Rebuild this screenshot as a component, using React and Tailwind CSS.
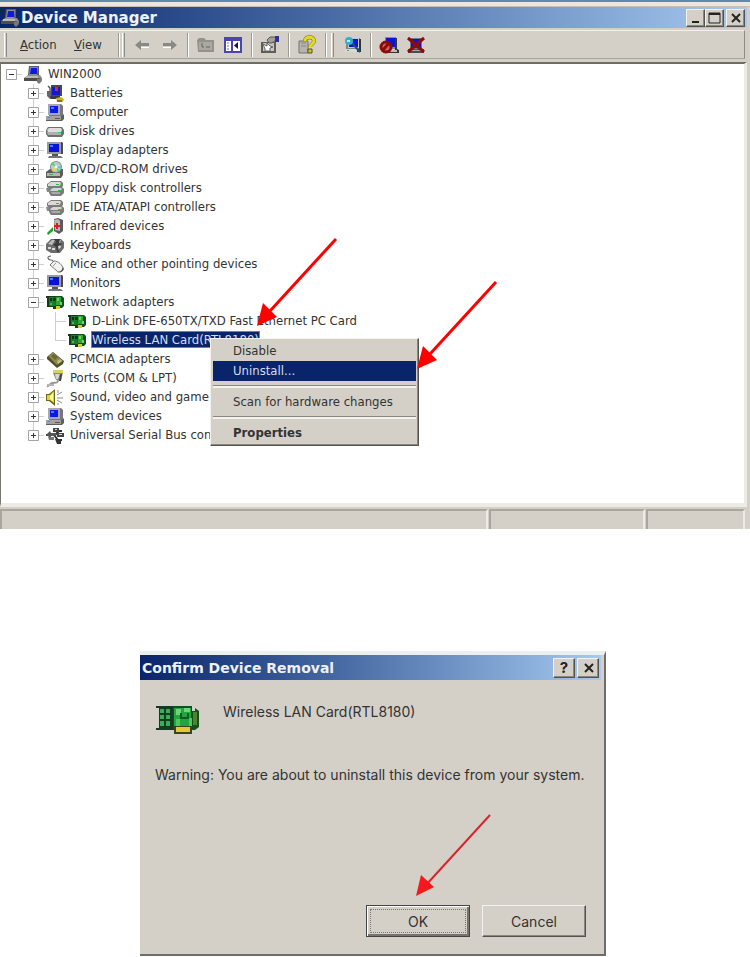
import React from "react";

const UI_FONT = "font-['DejaVu_Sans_Condensed','DejaVu_Sans',sans-serif]";
const TITLE_FONT = "font-['DejaVu_Sans',Verdana,sans-serif]";
const RAISED =
  "border border-t-[#f4f2ee] border-l-[#f4f2ee] border-r-[#55534e] border-b-[#55534e] shadow-[inset_-1px_-1px_0_#8a8780]";

/* ---------- device icons, drawn on a 22 x 19 cell ---------- */

function Cell({ children }) {
  return (
    <svg className="block h-[19px] w-[22px] shrink-0" viewBox="0 0 22 19" aria-hidden="true">
      {children}
    </svg>
  );
}

function PcShape() {
  return (
    <>
      <path d="M5 1h12l2 2v10H5z" fill="#77777b" />
      <path d="M4 1h12v11H4z" fill="#a9a9ad" />
      <path d="M6 3h8v7H6z" fill="#0a18e8" />
      <path d="M7 4h3v2H7z" fill="#3f8cff" />
      <path d="M2 13h16l2-2v5l-2 2H2z" fill="#5d5d60" />
      <path d="M2 13h15v4H2z" fill="#a2a2a2" />
      <path d="M4 14h2v1H4z" fill="#22c52c" />
      <path d="M11 15h5v1h-5z" fill="#555" />
    </>
  );
}

function DriveShape() {
  return (
    <>
      <path d="M2 8l2-3h14l2 3v4l-2 3H4l-2-3z" fill="#707070" />
      <path d="M3 8l2-2h12l1 2-1 2H4z" fill="#dededc" />
      <path d="M3 10h14v3H4z" fill="#b0b0ae" />
      <path d="M14 10h3v1h-3z" fill="#3bd24a" />
    </>
  );
}

function MonitorShape() {
  return (
    <>
      <path d="M4 1h14l1 1v11H5z" fill="#48484c" />
      <path d="M3 1h14v12H3z" fill="#9a9aa0" />
      <path d="M5 3h10v8H5z" fill="#0812d8" />
      <path d="M6 4h3v2H6z" fill="#3b82ff" />
      <path d="M8 13h6v2H8z" fill="#555" />
      <path d="M5 15h12l2 2H4z" fill="#777" />
    </>
  );
}

function ControllerShape() {
  return (
    <>
      <path d="M3 5l4-3h10l2 2v3l-3 3H5L3 8z" fill="#7c7c7c" />
      <path d="M4 5l3-2h9l1 2-2 2H4z" fill="#dadad8" />
      <path d="M5 10l3-2h10l2 2v4l-3 3H7l-2-3z" fill="#7c7c7c" />
      <path d="M6 11l3-2h8l1 1-2 2H7z" fill="#d4d4d2" />
      <path d="M7 13h9v2H8z" fill="#a9a9a7" />
      <path d="M2 9h3v3h2v1H3z" fill="#888" />
      <path d="M12 5h3v1h-3zM14 11h3v1h-3z" fill="#29c33a" />
    </>
  );
}

function CardShape() {
  return (
    <>
      <path d="M2 3h2v11H3v-9H2zM4 3h9v11H4z" fill="#123c1e" />
      <path d="M5 4h7v9H5z" fill="#1b7d2c" />
      <path d="M6 5h2v3H6zM9 5h3v3H9z" fill="#0c3316" />
      <path d="M6 10h2v2H6z" fill="#54b94d" />
      <path d="M11 3h7l2 2v8l-2 2h-6z" fill="#0f5420" />
      <path d="M12 4h5v8h-5z" fill="#2ba534" />
      <path d="M13 5h2v3h-2zM16 9h2v3h-2z" fill="#7bd05c" />
      <path d="M9 13h6v3H9z" fill="#1a3d1d" />
      <path d="M12 13h4v3h-4z" fill="#d7cb2c" />
    </>
  );
}

const ICONS = {
  root: (
    <>
      <path d="M7 1h10v9H6z" fill="#5a5a60" />
      <path d="M8 2h8l-1 8H7z" fill="#8e8e98" />
      <path d="M9 3h6v6H8z" fill="#0a18e8" />
      <path d="M2 13l4-3h12l2 3v2H2z" fill="#8f8f8f" />
      <path d="M2 13h17v3H2z" fill="#4e4e50" />
      <path d="M4 11h12v2H4z" fill="#b9b9b9" />
      <path d="M15 14l4-1 1 3-3 3-2-2z" fill="#787878" />
    </>
  ),
  battery: (
    <>
      <path d="M4 2l2 2v5l2 3" fill="none" stroke="#555" strokeWidth="1.4" />
      <path d="M7 1h11v11H7z" fill="#444a5c" />
      <path d="M8 3h8v8H8z" fill="#1018d0" />
      <path d="M11 3h3v4h-3z" fill="#d4235f" />
      <path d="M3 7h4v6h9v2H6l-3-3z" fill="#66666e" />
      <path d="M6 12h10v3H7z" fill="#3a3a48" />
      <path d="M12 14l5-1 3 2-1 3h-6z" fill="#c4b72e" />
      <path d="M13 16h5v2h-5z" fill="#81771a" />
    </>
  ),
  computer: <PcShape />,
  disk: <DriveShape />,
  display: <MonitorShape />,
  cd: (
    <>
      <path d="M2 12l4-3h13v6l-2 3H2z" fill="#5c5c5c" />
      <path d="M3 13h13v3H3z" fill="#b5b5b2" />
      <circle cx="12" cy="7" r="6" fill="#858b88" />
      <circle cx="12" cy="7" r="5" fill="#c4cbc7" />
      <path d="M12 7L7 4l2-2zM12 7l2 5 2-1z" fill="#44d966" />
      <path d="M12 7l-2 5-2-2z" fill="#e8d83a" />
      <path d="M12 7l5-1v3z" fill="#56c7e6" />
      <circle cx="12" cy="7" r="1.4" fill="#fff" />
      <path d="M5 14h4v1H5z" fill="#35ba42" />
    </>
  ),
  controller: <ControllerShape />,
  infrared: (
    <>
      <path d="M10 2l4-1 5 2v11l-4 3-5-3z" fill="#5b5b5e" />
      <path d="M10 3l4-1 2 2v10l-5-1z" fill="#b6b8ba" />
      <path d="M12 6h2v2h2v2h-2v2h-2v-2h-2V8h2z" fill="#e31b1b" />
      <path d="M3 16l6-6v4l-5 4z" fill="#11a91f" />
    </>
  ),
  keyboard: (
    <>
      <path d="M2 8l5-5h10l3 3v6l-4 5H7l-5-3z" fill="#6d6d6d" />
      <path d="M4 8l4-4h3l-3 5zM11 9l3-5h3l-2 5z" fill="#bcbcbc" />
      <path d="M4 11h3v2H4zM8 12h3v2H8zM13 11l3-2 1 2-3 3z" fill="#d8d8d8" />
      <path d="M10 3l2 3-3 3 3 2 1 5h2l-1-6 5-2-4-1 1-4z" fill="#3c3c3c" />
    </>
  ),
  mouse: (
    <>
      <path d="M7 1C2 1 4 5 7 5c3 0 2 2 3 3" fill="none" stroke="#666" strokeWidth="1.2" />
      <path d="M6 10l4-4c4 0 9 4 9 8 0 3-4 4-6 2z" fill="#f2f2f0" stroke="#777" />
      <path d="M19 12c2 3-1 6-6 5 3 0 5-1 6-5z" fill="#444" />
      <path d="M9 11l3-3" stroke="#999" />
    </>
  ),
  card: <CardShape />,
  pcmcia: (
    <>
      <path d="M3 7l6-5 11 9-1 3-6 4L3 9z" fill="#4f4e24" />
      <path d="M4 6l5-4 10 9-6 4z" fill="#8b8850" />
      <path d="M7 6l3-2 4 3-3 3z" fill="#6b683b" />
      <path d="M13 11l3-2 2 2-4 3z" fill="#c0bb84" />
    </>
  ),
  ports: (
    <>
      <path d="M9 1h10v3H9z" fill="#d8d25a" />
      <path d="M9 4h10l-2 7h-5z" fill="#8a8a88" />
      <path d="M11 5h5l-2 5h-2z" fill="#d4d4d2" />
      <path d="M16 5h2l-1 7h-2z" fill="#444" />
      <path d="M14 11c0 4-3 2-6 3s-3 4-5 3" fill="none" stroke="#999" strokeWidth="2" />
      <path d="M3 15h7v2H3z" fill="#b5b5b3" />
    </>
  ),
  sound: (
    <>
      <path d="M2 6h3l6-5v17l-6-5H2z" fill="#6d6818" />
      <path d="M3 7h3l4-4v12l-4-3H3z" fill="#e3d52d" />
      <path d="M6 8l3-3v8l-3-2z" fill="#fbf7a0" />
      <path d="M13 7l5-3M13 10h6M13 12l5 3M14 2v3M14 15v2" stroke="#8b8b8b" />
    </>
  ),
  usb: (
    <>
      <path d="M2 9h9l4-4h3M10 9l4 5h4" fill="none" stroke="#2e2e2e" strokeWidth="2" />
      <path d="M2 9l4-4 1 2h5v3H7v2z" fill="#555" />
      <path d="M9 2h6v4H9zM13 7h7v4h-7z" fill="#444" />
      <path d="M15 8h3v1h-3zM11 3h2v1h-2z" fill="#ddd" />
      <path d="M11 13h6v5h-4z" fill="#333" />
      <path d="M4 11h6v3H5z" fill="#777" />
    </>
  ),
};

/* ---------- tree ---------- */

const LINE = "#cfcfcf";

function Connector({ top = true, bottom = true, right = true }) {
  return (
    <Cell>
      {top && <path d="M11.5 0v10" stroke={LINE} />}
      {bottom && <path d="M11.5 9v10" stroke={LINE} />}
      {right && <path d="M11 9.5h11" stroke={LINE} />}
    </Cell>
  );
}

function Expander({ open, label, top = true, bottom = true }) {
  return (
    <button type="button" aria-expanded={open} aria-label={label} className="shrink-0">
      <Cell>
        {top && <path d="M11.5 0v5" stroke={LINE} />}
        {bottom && <path d="M11.5 14v5" stroke={LINE} />}
        <path d="M16 9.5h6" stroke={LINE} />
        <path d="M6.5 4.5h10v10h-10z" fill="#fff" stroke="#a3a3a3" />
        <path d="M9 9.5h5" stroke="#333" />
        {!open && <path d="M11.5 7v5" stroke="#333" />}
      </Cell>
    </button>
  );
}

const DEVICES = [
  ["Batteries", "battery"],
  ["Computer", "computer"],
  ["Disk drives", "disk"],
  ["Display adapters", "display"],
  ["DVD/CD-ROM drives", "cd"],
  ["Floppy disk controllers", "controller"],
  ["IDE ATA/ATAPI controllers", "controller"],
  ["Infrared devices", "infrared"],
  ["Keyboards", "keyboard"],
  ["Mice and other pointing devices", "mouse"],
  ["Monitors", "display"],
  [
    "Network adapters",
    "card",
    ["D-Link DFE-650TX/TXD Fast Ethernet PC Card", "Wireless LAN Card(RTL8180)"],
  ],
  ["PCMCIA adapters", "pcmcia"],
  ["Ports (COM & LPT)", "ports"],
  ["Sound, video and game controllers", "sound"],
  ["System devices", "computer"],
  ["Universal Serial Bus controllers", "usb"],
];

function Row({ icon, text, selected, children }) {
  return (
    <div className="flex h-[19px] items-start whitespace-nowrap">
      {children}
      <Cell>{ICONS[icon]}</Cell>
      <span
        className={
          selected
            ? "ml-[3px] bg-[#0a246a] px-px leading-[17px] text-[#d5dcf0] outline outline-1 -outline-offset-1 outline-[#8c8250]"
            : "ml-1 leading-[17px]"
        }
      >
        {text}
      </span>
    </div>
  );
}

function DeviceTree() {
  return (
    <div className="text-[13px] text-[#333]">
      <Row icon="root" text="WIN2000">
        <Expander open label="WIN2000" top={false} bottom={false} />
      </Row>
      <ul>
        {DEVICES.map(([name, icon, kids], i) => (
          <li key={name}>
            <Row icon={icon} text={name}>
              <span className="w-[22px] shrink-0" />
              <Expander open={!!kids} label={name} bottom={i < DEVICES.length - 1} />
            </Row>
            {kids && (
              <ul>
                {kids.map((kid, k) => (
                  <li key={kid}>
                    <Row icon="card" text={kid} selected={k === 1}>
                      <span className="w-[22px] shrink-0" />
                      <Connector right={false} />
                      <Connector bottom={k === 0} />
                    </Row>
                  </li>
                ))}
              </ul>
            )}
          </li>
        ))}
      </ul>
    </div>
  );
}

/* ---------- context menu ---------- */

function MenuItem({ children, className = "" }) {
  return (
    <button
      type="button"
      role="menuitem"
      className={`block h-5 w-full pl-5 text-left leading-5 ${className}`}
    >
      {children}
    </button>
  );
}

function MenuLine() {
  return <div role="separator" className="my-1 h-[3px] border-t border-b-2 border-t-[#8a8780] border-b-[#f4f2ee]" />;
}

function ContextMenu() {
  return (
    <div
      role="menu"
      className={`absolute top-[274px] left-[209px] w-[209px] bg-[#d4d0c8] p-[2px] text-[13px] text-[#333] ${RAISED}`}
    >
      <MenuItem>Disable</MenuItem>
      <MenuItem className="bg-[#0a246a] text-[#d5dcf0]">Uninstall...</MenuItem>
      <MenuLine />
      <MenuItem>Scan for hardware changes</MenuItem>
      <MenuLine />
      <MenuItem className="font-bold">Properties</MenuItem>
    </div>
  );
}

/* ---------- window chrome ---------- */

function CaptionButton({ label, children, size = "h-[18px] w-[19px]", className = "" }) {
  return (
    <button
      type="button"
      aria-label={label}
      className={`flex items-center justify-center bg-[#d4d0c8] ${size} ${RAISED} ${className}`}
    >
      <svg className="h-[14px] w-[15px]" viewBox="0 0 15 14" fill="none" stroke="#222" strokeWidth="2">
        {children}
      </svg>
    </button>
  );
}

function ToolButton({ label, children, className = "" }) {
  return (
    <button type="button" aria-label={label} className={`shrink-0 ${className}`}>
      <svg className="block h-5 w-5" viewBox="0 0 20 20">
        {children}
      </svg>
    </button>
  );
}

function Divider({ className = "" }) {
  return <span className={`h-6 w-[2px] shrink-0 border-l border-l-[#9d9a93] border-r border-r-white ${className}`} />;
}

function Grip({ className = "" }) {
  return <span className={`h-6 w-[3px] shrink-0 border-l border-l-white border-r border-r-[#8f8c85] ${className}`} />;
}

function Toolbar() {
  return (
    <div className="mr-[5px] flex h-[29px] items-center border-t border-r border-b border-t-[#f3f1ed] border-r-[#8f8c85] border-b-[#a7a49d] text-[13px] text-[#333]">
      <Grip className="ml-1" />
      <button type="button" className="ml-[13px] w-[37px] text-left">
        <span className="underline">A</span>ction
      </button>
      <button type="button" className="ml-[17px] w-[28px] text-left">
        <span className="underline">V</span>iew
      </button>
      <Divider className="ml-[16px]" />
      <Grip className="ml-[2px]" />
      <ToolButton label="Back" className="ml-[8px]">
        <path d="M2 10l6-5v3h8v3H8v4z" fill="#8b8984" />
        <path d="M8 12h8v1H8z" fill="#fff" />
      </ToolButton>
      <ToolButton label="Forward" className="ml-[7px]">
        <path d="M17 10l-6-5v3H3v3h8v4z" fill="#8b8984" />
        <path d="M3 12h8v1H3z" fill="#fff" />
      </ToolButton>
      <Divider className="ml-[7px]" />
      <ToolButton label="Up one level" className="ml-[7px]">
        <path d="M1 5l2-2h5l2 2h8v12H2z" fill="#95928c" />
        <path d="M3 7h13v8H3z" fill="#aba8a1" />
        <path d="M6 8v4h2M10 12h4" stroke="#66645f" fill="none" />
      </ToolButton>
      <ToolButton label="Show or hide console tree" className="ml-[7px]">
        <path d="M2 3h16v14H2z" fill="#fff" stroke="#4b46ad" strokeWidth="2" />
        <path d="M2 3h16v3H2z" fill="#4b46ad" />
        <path d="M8 5h2v12H8z" fill="#4b46ad" />
        <path d="M4 8h2M4 11h2M4 14h2" stroke="#77b" />
        <path d="M15 7v7l-4-3.500z" fill="#181830" />
      </ToolButton>
      <Divider className="ml-[8px]" />
      <ToolButton label="Properties" className="ml-[7px]">
        <path d="M1 7h15v11H1z" fill="#5d5c59" />
        <path d="M3 8h11v8H3z" fill="#c9c6be" />
        <path d="M3 9l4 2V8l3 3 3 1-3 1v3H5v-2z" fill="#fff" stroke="#666" />
        <path d="M7 5l3-3h6v3l-4 3H9z" fill="#a3a19b" stroke="#55544f" />
        <path d="M15 1h4v6h-4z" fill="#342e96" />
      </ToolButton>
      <Divider className="ml-[8px]" />
      <ToolButton label="Help" className="ml-[7px]">
        <path d="M2 6h9v12H2z" fill="#b7b4ad" stroke="#75736e" />
        <path d="M4 8h5M4 11h5" stroke="#88867f" />
        <path d="M8 6c0-5 9-5 9 0 0 3-4 3-4 6" fill="none" stroke="#77701d" strokeWidth="4" />
        <path d="M8 6c0-5 9-5 9 0 0 3-4 3-4 6" fill="none" stroke="#e6da20" strokeWidth="3" />
        <path d="M11 14h4v4h-4z" fill="#d3c71e" stroke="#55501a" />
      </ToolButton>
      <Divider className="ml-[8px]" />
      <Grip className="ml-[4px]" />
      <ToolButton label="Scan for hardware changes" className="ml-[9px]">
        <path d="M3 3h14v13H3z" fill="#84848a" />
        <path d="M5 3h11v10H5z" fill="#c8c8cb" />
        <path d="M6 4h9v8H6z" fill="#0815d8" />
        <path d="M16 4h2v13H4v-2h12z" fill="#333" />
        <path d="M2 14h12v3H2z" fill="#d9d9d6" />
        <path d="M9 8l8 9" stroke="#17527a" strokeWidth="2" />
        <circle cx="6" cy="6" r="4" fill="#35aecd" />
        <path d="M4 5h3v2H4z" fill="#a8f2f7" />
        <path d="M4 15h2v1H4z" fill="#20bd36" />
      </ToolButton>
      <Divider className="ml-[7px]" />
      <ToolButton label="Disable" className="ml-[7px]">
        <path d="M6 2h11v12H6z" fill="#8c8c91" />
        <path d="M7 3h9v9H7z" fill="#0815d8" />
        <path d="M16 3h2v11l2 1v3H9v-3h7z" fill="#343436" />
        <path d="M9 15h9v2H9z" fill="#bbb" />
        <circle cx="7" cy="12" r="5" fill="#c16b64" stroke="#8d0b0b" strokeWidth="3" />
        <path d="M4 15l6-7" stroke="#8d0b0b" strokeWidth="3" />
      </ToolButton>
      <ToolButton label="Uninstall" className="ml-[7px]">
        <path d="M4 3h12v12H4z" fill="#77777d" />
        <path d="M5 4h10v9H5z" fill="#0815d8" />
        <path d="M2 14h16v4H2z" fill="#4c4c50" />
        <path d="M4 15h12v1H4z" fill="#aaa" />
        <path d="M2 3l16 14M18 3L2 17" stroke="#8d0b0b" strokeWidth="3" />
      </ToolButton>
    </div>
  );
}

function StatusPane({ className = "" }) {
  return (
    <div
      className={`border-t-2 border-l-2 border-r-2 border-t-[#a9a69f] border-l-[#a9a69f] border-r-[#ecebe6] ${className}`}
    />
  );
}

function RedArrow({ className, thin }) {
  return (
    <svg
      className={`pointer-events-none absolute h-[90px] w-[82px] ${className}`}
      viewBox="0 0 82 90"
      aria-hidden="true"
    >
      {thin ? (
        <>
          <path d="M11 75L75 5" stroke="#d8242a" strokeWidth="2" />
          <path d="M1 86l5-21 13 12z" fill="#f5181c" />
        </>
      ) : (
        <>
          <path d="M14 74L80 2" stroke="#f00" strokeWidth="3" />
          <path d="M1 89l6-23 14 14z" fill="#f00" />
        </>
      )}
    </svg>
  );
}

function DeviceManager() {
  return (
    <section className="relative border-t-2 border-t-[#6189b0] bg-[#d4d0c8]">
      <div className="h-[5px] border-b border-b-[#c4c0b8] bg-[#e9e7e2]" />
      <header className="mr-[3px] flex h-[21px] items-center bg-linear-to-r from-[#0a246a] to-[#a6caf0]">
        <svg className="h-[19px] w-[21px] shrink-0" viewBox="1 0 21 19" aria-hidden="true">
          {ICONS.root}
        </svg>
        <h1 className={`text-[15px] leading-5 font-bold text-[#eef1f8] ${TITLE_FONT}`}>Device Manager</h1>
        <div className="mr-[2px] ml-auto flex">
          <CaptionButton label="Minimize">
            <path d="M4 11h7" />
          </CaptionButton>
          <CaptionButton label="Maximize">
            <path d="M2 2h11v10H2z" strokeWidth="1" />
            <path d="M2 3h11" />
          </CaptionButton>
          <CaptionButton label="Close" className="ml-[2px]">
            <path d="M4 3l8 8M12 3l-8 8" />
          </CaptionButton>
        </div>
      </header>
      <div className="pt-[2px]">
        <Toolbar />
      </div>
      <div className="relative mt-[3px] mr-[3px] border-t-2 border-r-[3px] border-b-4 border-l border-t-[#6f6d68] border-r-[#ecebe6] border-b-[#ecebe6] border-l-[#77756f] bg-white pt-px pb-[58px]">
        <div className="-ml-px">
          <DeviceTree />
        </div>
        <ContextMenu />
      </div>
      <footer className="mr-[5px] flex h-[22px] gap-px pt-[2px]">
        <StatusPane className="flex-1" />
        <StatusPane className="w-[156px]" />
        <StatusPane className="w-[99px]" />
      </footer>
      <RedArrow className="top-[235px] left-[256px]" />
      <RedArrow className="top-[278px] left-[416px]" />
    </section>
  );
}

function ConfirmDialog() {
  return (
    <section
      role="dialog"
      aria-labelledby="confirm-title"
      className="relative ml-[140px] w-[466px] border-t-4 border-r-2 border-b-2 border-t-[#eceef0] border-r-[#6f6d6a] border-b-[#6f6d6a] bg-[#d4d0c8] font-[Inter,'Liberation_Sans',sans-serif] text-[14px] text-[#333]"
    >
      <header className="mr-[3px] flex h-[25px] items-center bg-linear-to-r from-[#0a246a] to-[#a6caf0] pl-[2px]">
        <h2 id="confirm-title" className={`text-[14px] leading-5 font-bold text-[#eef1f8] ${TITLE_FONT}`}>
          Confirm Device Removal
        </h2>
        <div className="mr-[2px] ml-auto flex gap-[2px]">
          <button
            type="button"
            aria-label="Help"
            className={`h-5 w-[22px] bg-[#d4d0c8] text-[15px] leading-[17px] font-bold text-[#222] ${RAISED}`}
          >
            ?
          </button>
          <CaptionButton label="Close" size="h-5 w-[22px]">
            <path d="M4 3l8 8M12 3l-8 8" />
          </CaptionButton>
        </div>
      </header>
      <div className="flex items-start pt-[22px] pl-[15px]">
        <svg className="mt-[2px] h-[33px] w-[46px] shrink-0" viewBox="0 0 46 33" aria-hidden="true">
          <path d="M1 2h18v24H1v-2h3V4H1z" fill="#123d20" />
          <path d="M5 5h4v4H5zM11 5h4v4h-4zM5 11h4v4H5zM11 11h4v4h-4zM5 17h4v5H5zM11 17h4v5h-4z" fill="#38ad57" />
          <path d="M18 2h19v5h3v-3l4 3v16l-4 3H18z" fill="#12511f" />
          <path d="M19 4h17v20H19z" fill="#20a63c" />
          <path d="M21 5h5v6h-5zM29 4h6v4h-6z" fill="#6fd377" />
          <path d="M26 9v5h7V9" fill="none" stroke="#115a22" strokeWidth="2" />
          <path d="M21 15h4v7h-4zM34 14h3v9h-3z" fill="#52c759" />
          <path d="M38 8h4v13h-4z" fill="#53822f" />
          <path d="M19 22h18v8H19z" fill="#3b4519" />
          <path d="M21 23h14v5H21z" fill="#dfc936" />
        </svg>
        <p className="ml-[22px] leading-5">Wireless LAN Card(RTL8180)</p>
      </div>
      <p className="mt-[28px] pl-[15px] leading-5 whitespace-nowrap">
        Warning: You are about to uninstall this device from your system.
      </p>
      <div className="mt-[120px] mr-[18px] mb-[17px] flex justify-end gap-[12px]">
        <button
          type="button"
          className="h-8 w-[104px] border border-[#444] p-[3px] shadow-[inset_1px_1px_0_#fff,inset_-2px_-2px_0_#77746e]"
        >
          <span className="flex h-full items-center justify-center border border-dotted border-[#777]">OK</span>
        </button>
        <button type="button" className={`h-8 w-[104px] ${RAISED}`}>
          Cancel
        </button>
      </div>
      <RedArrow thin className="top-[155px] left-[275px]" />
    </section>
  );
}

export default function App() {
  return (
    <main className={`min-h-screen bg-white ${UI_FONT}`}>
      <DeviceManager />
      <div className="pt-[122px]">
        <ConfirmDialog />
      </div>
    </main>
  );
}
